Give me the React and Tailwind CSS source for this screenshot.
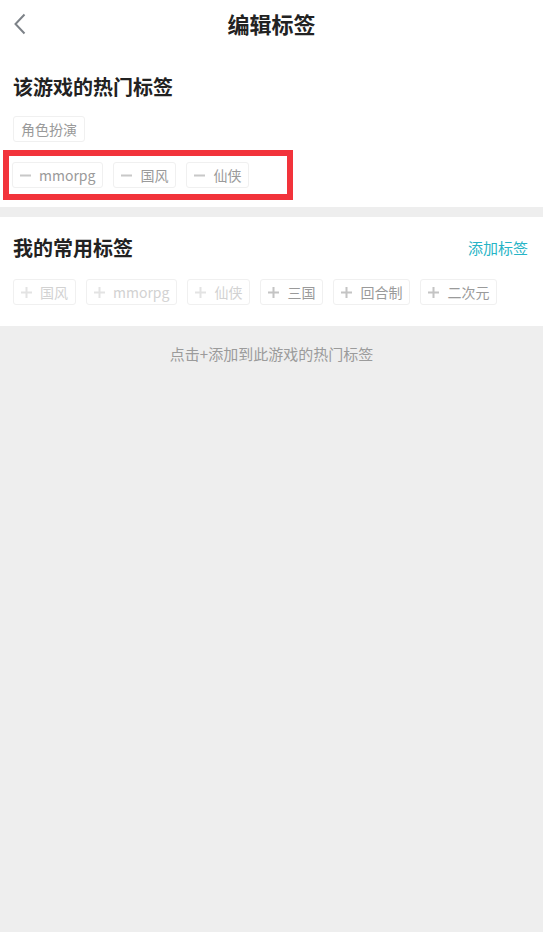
import React from "react";

const font = { fontFamily: '"Noto Sans CJK SC", "Noto Sans", sans-serif' };

function Tag({ icon, label, faded }) {
  return (
    <div
      className={`flex h-[26px] items-center gap-[8px] rounded-[3px] border border-[#f0f0f0] px-[7px] text-[14px] ${
        faded ? "text-[#d2d2d2]" : "text-[#9a9a9a]"
      }`}
    >
      <span className="flex w-[11px] items-center justify-center">
        {icon === "minus" ? (
          <svg width="11" height="11" viewBox="0 0 11 11">
            <rect x="0" y="4.5" width="11" height="2" fill="#c8c8c8" />
          </svg>
        ) : (
          <svg width="11" height="11" viewBox="0 0 11 11">
            <rect x="0" y="4.5" width="11" height="2" fill={faded ? "#e3e3e3" : "#c4c4c4"} />
            <rect x="4.5" y="0" width="2" height="11" fill={faded ? "#e3e3e3" : "#c4c4c4"} />
          </svg>
        )}
      </span>
      <span className="leading-none">{label}</span>
    </div>
  );
}

export default function App() {
  return (
    <div className="flex min-h-[932px] w-[543px] flex-col bg-[#eeeeee]" style={font}>
      <div className="bg-white">
        <div className="relative flex h-[46px] items-center justify-center">
          <svg className="absolute left-[13px] top-[13px]" width="14" height="22" viewBox="0 0 14 22">
            <path d="M11.5 1.5 L2.5 11 L11.5 20.5" fill="none" stroke="#7d8288" strokeWidth="2" />
          </svg>
          <span className="text-[22px] font-bold leading-[28px] text-[#222]">编辑标签</span>
        </div>
        <div className="px-[13px] pt-[29px]">
          <div className="text-[20px] font-bold leading-[24px] text-[#222]">该游戏的热门标签</div>
          <div className="mt-[17px] flex">
            <div className="flex h-[26px] items-center rounded-[3px] border border-[#f0f0f0] px-[7px] text-[14px] text-[#9a9a9a]">
              角色扮演
            </div>
          </div>
        </div>
        <div className="ml-[3px] mt-[8px] w-[290px] border-[6px] border-[#f2333b] px-[3px] py-[6px]">
          <div className="flex gap-[10px]">
            <Tag icon="minus" label="mmorpg" />
            <Tag icon="minus" label="国风" />
            <Tag icon="minus" label="仙侠" />
          </div>
        </div>
        <div className="h-[7px]" />
      </div>
      <div className="h-[10px]" />
      <div className="bg-white px-[13px] pb-[21px] pt-[19px]">
        <div className="flex items-center justify-between">
          <span className="text-[20px] font-bold leading-[24px] text-[#222]">我的常用标签</span>
          <span className="mr-[2px] text-[15px] text-[#27b4c6]">添加标签</span>
        </div>
        <div className="mt-[19px] flex gap-[10px]">
          <Tag icon="plus" label="国风" faded />
          <Tag icon="plus" label="mmorpg" faded />
          <Tag icon="plus" label="仙侠" faded />
          <Tag icon="plus" label="三国" />
          <Tag icon="plus" label="回合制" />
          <Tag icon="plus" label="二次元" />
        </div>
      </div>
      <div className="pt-[17px] text-center text-[15px] text-[#9b9b9b]">点击+添加到此游戏的热门标签</div>
    </div>
  );
}
